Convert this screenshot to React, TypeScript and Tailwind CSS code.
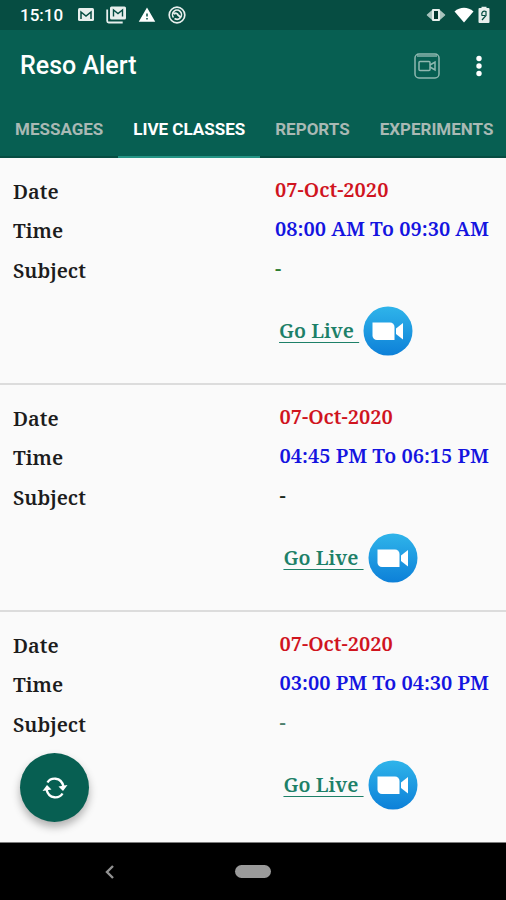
import { MdWarning } from "react-icons/md";

const tabs = ["MESSAGES", "LIVE CLASSES", "REPORTS", "EXPERIMENTS"];

const classes = [
  { date: "07-Oct-2020", time: "08:00 AM To 09:30 AM", subject: "-", subjectColor: "text-[#2e7d32]" },
  { date: "07-Oct-2020", time: "04:45 PM To 06:15 PM", subject: "-", subjectColor: "text-[#1b2b1b]" },
  { date: "07-Oct-2020", time: "03:00 PM To 04:30 PM", subject: "-", subjectColor: "text-[#4d7f6c]" },
];

const StatusBar = () => {
  return (
    <div className="flex h-[30px] items-center justify-between bg-[#064d42] pl-5 pr-4 text-white">
      <div className="flex items-center gap-3">
        <span className="w-[46px] text-[17px] leading-5 font-medium">15:10</span>
        <svg width="16" height="14" viewBox="0 0 16 14">
          <rect width="16" height="13" rx="1.5" fill="#e8efed" />
          <path d="M3 11V4l5 4 5-4v7" fill="none" stroke="#064d42" strokeWidth="1.5" />
        </svg>
        <svg width="20" height="18" viewBox="0 0 20 18">
          <rect x="4" y="0.5" width="16" height="13" rx="1.5" fill="#e8efed" />
          <path d="M7.500 10.500V4l4.500 3.500L16.500 4v6.500" fill="none" stroke="#064d42" strokeWidth="1.400" />
          <path d="M1.200 3.500v11.500a1.500 1.500 0 0 0 1.500 1.500h14" fill="none" stroke="#e8efed" strokeWidth="1.800" />
        </svg>
        <MdWarning size={18} />
        <svg width="18" height="18" viewBox="0 0 18 18" fill="none" stroke="#e8efed">
          <circle cx="9" cy="9" r="7.800" strokeWidth="1.700" />
          <path d="M5.500 11.500a4.500 4.500 0 1 1 7 0a4.500 4.500 0 0 1-6 1" strokeWidth="1.600" />
          <path d="M5.500 8c2-1.500 4-.5 4.500 1l3 2.500" strokeWidth="2" />
        </svg>
      </div>
      <div className="flex items-center">
        <svg className="mr-2" width="20" height="16" viewBox="0 0 20 16">
          <path d="M6 4v8L1.500 8zM14 4v8l4.500-4z" fill="#a9c4be" stroke="#a9c4be" strokeWidth="1.500" strokeLinejoin="round" />
          <rect x="6" y="2" width="8" height="12" rx="1" fill="#e8efed" />
          <rect x="8" y="4" width="4" height="8" fill="#04372f" />
        </svg>
        <svg width="20" height="16" viewBox="0 0 20 16">
          <path d="M0.500 4.500C6-.5 14-.5 19.500 4.500L10 15.500z" fill="#fff" />
        </svg>
        <svg className="ml-1" width="12" height="18" viewBox="0 0 12 18">
          <path d="M3.500 2V.8h5V2H10.500a1 1 0 0 1 1 1v13a1 1 0 0 1-1 1h-9a1 1 0 0 1-1-1V3a1 1 0 0 1 1-1z" fill="#e8efed" />
          <path d="M4 14l4-4.500V5.500C5 4.500 3 6.500 4 9.500h3" fill="none" stroke="#064d42" strokeWidth="1.200" />
        </svg>
      </div>
    </div>
  );
};

const ZoomIcon = () => {
  return (
    <svg width="50" height="50" viewBox="0 0 50 50">
      <defs>
        <linearGradient id="zoom" x1="0" y1="0" x2="0" y2="1">
          <stop offset="0" stopColor="#2fb4ea" />
          <stop offset="1" stopColor="#0d80d8" />
        </linearGradient>
      </defs>
      <circle cx="25" cy="25" r="24.500" fill="url(#zoom)" />
      <path d="M9.500 16.500H27a4.500 4.500 0 0 1 4.500 4.500V34H14a4.500 4.500 0 0 1-4.500-4.500z" fill="#fff" />
      <path d="M33 22.500l7-5.500v16.500L33 28z" fill="#fff" />
    </svg>
  );
};

const App = () => {
  return (
    <div className="flex min-h-screen flex-col bg-[#fafafa] font-['Roboto',sans-serif]">
      <StatusBar />
      <header className="bg-[#075f52] text-white">
        <div className="flex h-[71px] items-center justify-between pl-5 pr-4">
          <h1 className="text-[25px] leading-8 font-medium">Reso Alert</h1>
          <div className="flex items-center gap-7">
            <button type="button" aria-label="Video">
              <svg width="26" height="26" viewBox="0 0 26 26" fill="none" stroke="#8fb8b0" strokeWidth="1.500">
                <rect x="1" y="1" width="24" height="24" rx="4" />
                <path d="M3 3h20" strokeWidth="2" strokeOpacity="0.7" />
                <rect x="5" y="8.500" width="11" height="9" rx="1" />
                <path d="M16 12l5-3v8l-5-3" />
              </svg>
            </button>
            <button type="button" aria-label="More options">
              <svg width="22" height="24" viewBox="0 0 22 24" fill="#fff">
                <circle cx="11" cy="4.500" r="2.700" />
                <circle cx="11" cy="12" r="2.700" />
                <circle cx="11" cy="19.500" r="2.700" />
              </svg>
            </button>
          </div>
        </div>
        <nav className="flex h-[57px] overflow-hidden">
          {tabs.map((tab) => (
            <a
              key={tab}
              href="#"
              className={
                tab === "LIVE CLASSES"
                  ? "flex shrink-0 items-center border-b-2 border-[#259485] px-[15px] pt-px text-[17px] leading-6 font-bold text-white"
                  : "flex shrink-0 items-center border-b-2 border-[#064d42] px-[15px] pt-px text-[17px] leading-6 font-bold text-[#a9b9b4]"
              }
            >
              {tab}
            </a>
          ))}
        </nav>
      </header>

      <main className="relative flex flex-1 flex-col font-['Noto_Serif','DejaVu_Serif_Condensed','DejaVu_Serif',serif] text-[20px] leading-6 font-semibold">
        {classes.map((item) => (
          <section key={item.time} className="h-[227px] border-b-2 border-[#dcdcdc] pt-3 pl-[13px] pr-[17px] last-of-type:border-b-0">
            <dl className="grid grid-cols-[1fr_auto] grid-rows-[40px_38px_42px] items-center">
              <dt className="pt-1 text-[#1c1c1c]">Date</dt>
              <dd className="text-[#d0141e]">{item.date}</dd>
              <dt className="pt-1 text-[#1c1c1c]">Time</dt>
              <dd className="text-[#1414e0]">{item.time}</dd>
              <dt className="pt-1 text-[#1c1c1c]">Subject</dt>
              <dd className={item.subjectColor}>{item.subject}</dd>
              <dd className="col-start-2 pt-4 pl-1">
                <a href="#" className="flex items-center gap-1 text-[#1d8068]">
                  <span className="whitespace-pre underline decoration-1 underline-offset-4">{"Go Live "}</span>
                  <ZoomIcon />
                </a>
              </dd>
            </dl>
          </section>
        ))}
        <button
          type="button"
          aria-label="Refresh"
          className="absolute bottom-5 left-5 flex size-[69px] items-center justify-center rounded-full bg-[#075f52] text-white shadow-[0_5px_9px_rgba(0,0,0,0.3)]"
        >
          <svg width="28" height="28" viewBox="0 0 28 28" fill="none" stroke="currentColor" strokeWidth="2.400">
            <path d="M6.500 8.500C9.500 3.500 20 2 22.500 12.500" />
            <path d="M21.500 19.500C18.500 24.500 8 26 5.500 15.500" />
            <path d="M17.500 12.500l9-1.500-4.500 6zM10.500 15.500l-9 1.500 4.500-6z" fill="currentColor" stroke="none" />
          </svg>
        </button>
      </main>

      <footer className="grid h-[58px] grid-cols-[1fr_36px_1fr] items-center border-t border-[#7d7d7d] bg-black">
        <button type="button" aria-label="Back" className="flex justify-center pr-4">
          <svg width="10" height="14" viewBox="0 0 10 14" fill="none" stroke="#929292" strokeWidth="2.400">
            <path d="M8 1L2 7l6 6" />
          </svg>
        </button>
        <button type="button" aria-label="Home" className="h-[13px] rounded-full bg-[#9a9a9a]" />
      </footer>
    </div>
  );
};

export default App;
